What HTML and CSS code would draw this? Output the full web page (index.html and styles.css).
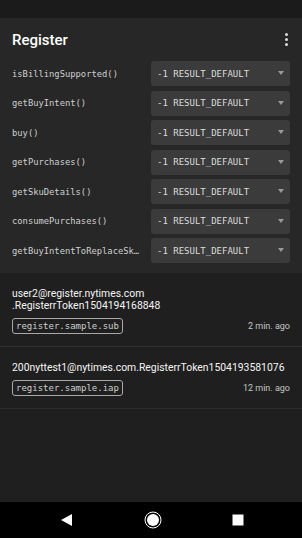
FILE: index.html
```html
<!DOCTYPE html>
<html lang="en">

<head>
    <meta charset="UTF-8">
    <meta name="viewport" content="width=device-width, initial-scale=1.0">
    <title>Register</title>
    <link rel="stylesheet" href="styles.css">
</head>

<body>

    <div class="status-bar"></div>

    <div class="app">
        <div class="top">
            <div class="toolbar">
                <h1>Register</h1>
                <div class="menu"><span></span><span></span><span></span></div>
            </div>

            <!-- Metodos de billing -->
            <div class="methods">
                <div class="method">
                    <span class="name">isBillingSupported()</span>
                    <div class="select">-1 RESULT_DEFAULT<i class="arrow"></i></div>
                </div>
                <div class="method">
                    <span class="name">getBuyIntent()</span>
                    <div class="select">-1 RESULT_DEFAULT<i class="arrow"></i></div>
                </div>
                <div class="method">
                    <span class="name">buy()</span>
                    <div class="select">-1 RESULT_DEFAULT<i class="arrow"></i></div>
                </div>
                <div class="method">
                    <span class="name">getPurchases()</span>
                    <div class="select">-1 RESULT_DEFAULT<i class="arrow"></i></div>
                </div>
                <div class="method">
                    <span class="name">getSkuDetails()</span>
                    <div class="select">-1 RESULT_DEFAULT<i class="arrow"></i></div>
                </div>
                <div class="method">
                    <span class="name">consumePurchases()</span>
                    <div class="select">-1 RESULT_DEFAULT<i class="arrow"></i></div>
                </div>
                <div class="method">
                    <span class="name">getBuyIntentToReplaceSk…</span>
                    <div class="select">-1 RESULT_DEFAULT<i class="arrow"></i></div>
                </div>
            </div>
        </div>

        <!-- Compras -->
        <ul class="purchases">
            <li>
                <div class="token">user2@register.nytimes.com<br>.RegisterrToken1504194168848</div>
                <div class="meta">
                    <span class="sku">register.sample.sub</span>
                    <span class="time">2 min. ago</span>
                </div>
            </li>
            <li>
                <div class="token">200nyttest1@nytimes.com.RegisterrToken1504193581076</div>
                <div class="meta">
                    <span class="sku">register.sample.iap</span>
                    <span class="time">12 min. ago</span>
                </div>
            </li>
        </ul>
    </div>

    <div class="nav-bar">
        <svg width="14" height="14" viewBox="0 0 14 14"><polygon points="13,1 13,13 2,7" fill="#fff"/></svg>
        <svg width="18" height="18" viewBox="0 0 18 18"><circle cx="9" cy="9" r="8" fill="none" stroke="#fff" stroke-width="1"/><circle cx="9" cy="9" r="6" fill="#fff"/></svg>
        <svg width="12" height="12" viewBox="0 0 12 12"><rect x="0.5" y="0.5" width="11" height="11" fill="#fff"/></svg>
    </div>

</body>

</html>
```

FILE: styles.css
```css
body {
    margin: 0;
    height: 538px;
    display: flex;
    flex-direction: column;
    background-color: #1f1f1f;
    font-family: Roboto, "Liberation Sans", sans-serif;
    color: #f2f2f2;
    overflow: hidden;
}

.status-bar {
    height: 18px;
    background-color: #1b1b1b;
}

.app {
    flex: 1;
    display: flex;
    flex-direction: column;
}

.top {
    background-color: #272727;
    padding-bottom: 10px;
}

.toolbar {
    height: 43px;
    display: flex;
    align-items: center;
    justify-content: space-between;
    padding: 0 12px;
}

.toolbar h1 {
    margin: 0;
    font-size: 15px;
    font-weight: 500;
    color: #fff;
}

.menu {
    display: flex;
    flex-direction: column;
    gap: 2px;
    margin-right: 2px;
}

.menu span {
    width: 3px;
    height: 3px;
    border-radius: 50%;
    background-color: #ddd;
}

.methods {
    display: flex;
    flex-direction: column;
    gap: 4.5px;
    padding: 0 12px;
}

.method {
    display: flex;
    align-items: center;
    justify-content: space-between;
    height: 25px;
}

.name {
    font-family: "DejaVu Sans Mono", monospace;
    font-size: 8.8px;
    color: #cfcfcf;
    white-space: nowrap;
}

.select {
    width: 139px;
    height: 25px;
    box-sizing: border-box;
    display: flex;
    align-items: center;
    padding: 0 6px;
    background-color: #3b3b3b;
    border-radius: 3px;
    font-family: "DejaVu Sans Mono", monospace;
    font-size: 9px;
    color: #dcdcdc;
    position: relative;
}

.arrow {
    position: absolute;
    right: 6px;
    top: 10px;
    border-left: 3.5px solid transparent;
    border-right: 3.5px solid transparent;
    border-top: 4px solid #9a9a9a;
}

.purchases {
    list-style: none;
    margin: 0;
    padding: 0;
}

.purchases li {
    padding: 15px 12px 12px;
    border-bottom: 1px solid #2f2f2f;
}

.token {
    font-size: 10.4px;
    line-height: 12px;
    color: #f4f4f4;
}

.meta {
    display: flex;
    align-items: center;
    justify-content: space-between;
    margin-top: 6px;
}

.sku {
    font-family: "DejaVu Sans Mono", monospace;
    font-size: 9px;
    line-height: 12px;
    color: #d0d0d0;
    border: 1px solid #a8a8a8;
    border-radius: 3px;
    padding: 1px 3px;
}

.time {
    font-size: 9px;
    color: #c4c4c4;
}

.nav-bar {
    height: 36px;
    background-color: #000;
    display: flex;
    align-items: center;
    justify-content: space-between;
    padding: 0 58px 0 59px;
}
```
